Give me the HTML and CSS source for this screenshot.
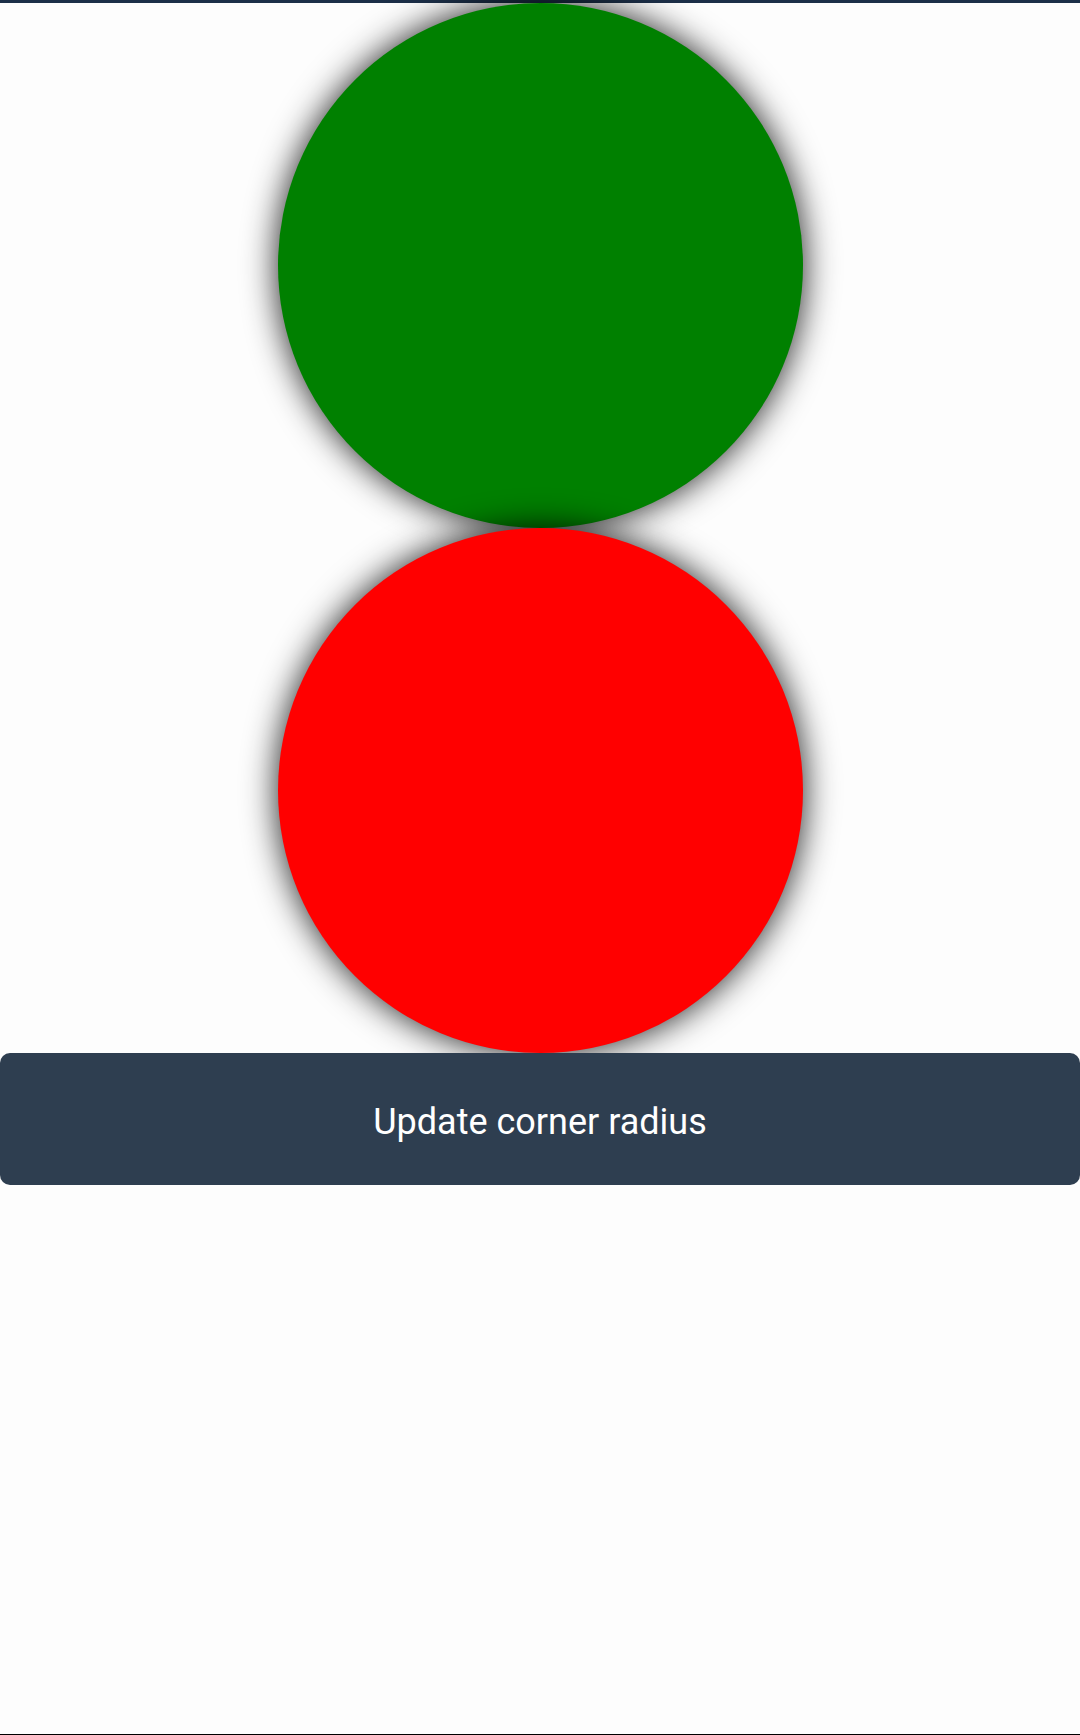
FILE: index.html
```html
<!DOCTYPE html>
<html>
<head>
<meta charset="utf-8">
<link rel="stylesheet" href="styles.css">
</head>
<body>
<div class="screen">
  <div class="topbar"></div>
  <div class="circles">
    <div class="circle green"></div>
    <div class="circle red"></div>
  </div>
  <button class="btn">Update corner radius</button>
  <div class="spacer"></div>
  <div class="bottomline"></div>
</div>
</body>
</html>
```
FILE: styles.css
```css
html, body {
  margin: 0;
  padding: 0;
  background: #fdfdfd;
}
.screen {
  width: 1080px;
  height: 1735px;
  display: flex;
  flex-direction: column;
  font-family: Roboto, "Liberation Sans", sans-serif;
}
.topbar {
  height: 3px;
  background: #1c2f48;
  flex: none;
}
.circles {
  display: flex;
  flex-direction: column;
  align-items: center;
  flex: none;
}
.circle {
  width: 525px;
  height: 525px;
  border-radius: 50%;
  box-shadow: 0 0 34px rgba(0, 0, 0, 0.9);
}
.green {
  background: #008000;
}
.red {
  background: #ff0000;
}
.btn {
  flex: none;
  height: 132px;
  width: 1080px;
  margin: 0;
  border: none;
  border-radius: 10px;
  background: #2e3e50;
  color: #ffffff;
  font-family: Roboto, "Liberation Sans", sans-serif;
  font-size: 36px;
  padding: 5px 0 0 0;
  position: relative;
  z-index: 1;
}
.spacer {
  flex: 1;
}
.bottomline {
  height: 1px;
  background: #000000;
  flex: none;
}
```
